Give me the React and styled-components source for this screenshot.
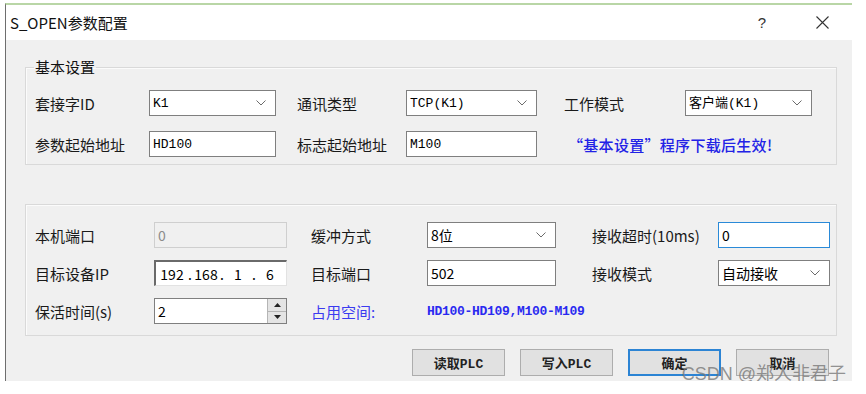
import React from 'react'
import styled, { createGlobalStyle, css } from 'styled-components'

const GlobalStyle = createGlobalStyle`
  body {
    margin: 0;
    background: #fff;
    font-family: "Noto Sans CJK SC", "Liberation Sans", sans-serif;
  }
`

const CJK = `"Noto Sans CJK SC", "Liberation Sans", sans-serif`
const MONO = `"Liberation Mono", "Noto Sans CJK SC", monospace`

const Window = styled.div`
  position: relative;
  width: 847px;
  height: 378px;
  margin: 3px 0 0 5px;
  box-sizing: border-box;
  border-top: 2px solid #b9d6a6;
  border-left: 1px solid #6e6e6e;
  display: flex;
  flex-direction: column;
`

const TitleBar = styled.div`
  height: 35px;
  flex: none;
  background: #fff;
  display: flex;
  align-items: center;
  padding: 0 0 0 4px;
  font-family: ${CJK};
  font-size: 15px;
  color: #111;
`

const Title = styled.div`
  flex: 1;
`

const TitleButton = styled.div`
  width: 60px;
  display: flex;
  align-items: center;
  justify-content: center;
  font-size: 15px;
  color: #333;
  font-family: "Liberation Sans", sans-serif;
`

const Body = styled.div`
  flex: 1;
  background: #f0f0f0;
  padding: 19px 15px 6px 19px;
  display: flex;
  flex-direction: column;
`

const GroupBox = styled.fieldset`
  margin: 0;
  padding: 0 0 7px 9px;
  border: 1px solid #d9d9d9;
  box-shadow: inset 1px 1px 0 #fbfbfb;
  min-width: 0;
`

const Legend = styled.legend`
  padding: 0 1px;
  margin-left: -1px;
  font-family: ${CJK};
  font-size: 15px;
  line-height: 16px;
  color: #111;
`

const Panel = styled.div`
  margin-top: 39px;
  border: 1px solid #d9d9d9;
  box-shadow: inset 1px 1px 0 #fbfbfb;
  padding: 17px 0 11px 9px;
`

const FormGrid = styled.div`
  display: grid;
  grid-template-columns: ${p => p.$cols};
  grid-auto-rows: 26px;
  row-gap: ${p => p.$rowGap}px;
  align-items: center;
  margin-top: ${p => p.$top || 0}px;
`

const Label = styled.div`
  padding-left: ${p => p.$indent || 0}px;
  font-family: ${CJK};
  font-size: 15px;
  color: #1a1a1a;
  white-space: nowrap;
`

const Field = styled.div`
  height: 26px;
  box-sizing: border-box;
  border: 1px solid #7f7f7f;
  background: #fff;
  display: flex;
  align-items: center;
  padding-left: 3px;
  font-family: ${p => (p.$mono ? MONO : CJK)};
  font-size: ${p => (p.$mono ? 13 : 14)}px;
  color: #000;
  white-space: pre;

  ${p => p.$disabled && css`
    background: #f0f0f0;
    border-color: #cfcfcf;
    color: #8c8c8c;
  `}

  ${p => p.$focus && css`
    border-color: #2a8ad8;
  `}

  ${p => p.$sunken && css`
    border-width: 2px 1px 1px 2px;
    border-color: #6a6a6a #e2e2e2 #e2e2e2 #6a6a6a;
    padding-left: 2px;
  `}
`

const FieldText = styled.span`
  flex: 1;
  line-height: 1;
`

const IpPart = styled.span`
  width: ${p => p.$w}px;
  text-align: center;
  flex: none;
`

const IpDot = styled.span`
  width: 8px;
  text-align: center;
  flex: none;
`

const Chevron = styled.svg`
  width: 10px;
  height: 6px;
  margin-right: 9px;
  flex: none;
`

const Spin = styled.div`
  width: 18px;
  height: 100%;
  flex: none;
  display: flex;
  flex-direction: column;
  border-left: 1px solid #b5b5b5;
`

const SpinButton = styled.div`
  flex: 1;
  background: #e4e4e4;
  display: flex;
  align-items: center;
  justify-content: center;
  & + & {
    border-top: 1px solid #b5b5b5;
  }
`

const Notice = styled.div`
  grid-column: ${p => p.$span};
  padding-left: ${p => p.$indent || 0}px;
  font-family: ${p => (p.$mono ? MONO : CJK)};
  font-size: ${p => (p.$mono ? 13 : 15)}px;
  font-weight: ${p => p.$weight || 400};
  color: ${p => p.$color || '#2525e8'};
  white-space: nowrap;
  letter-spacing: ${p => p.$spacing || 0}px;
`

const ButtonRow = styled.div`
  display: flex;
  justify-content: flex-end;
  gap: 15px;
  margin-top: 13px;
  padding-right: 8px;
`

const Button = styled.div`
  width: 93px;
  height: 27px;
  box-sizing: border-box;
  border: 1px solid #adadad;
  background: #e1e1e1;
  display: flex;
  align-items: center;
  justify-content: center;
  font-family: ${MONO};
  font-size: 13px;
  font-weight: 700;
  color: #222;

  ${p => p.$default && css`
    border: 2px solid #2c84d4;
  `}
`

const Watermark = styled.div`
  position: absolute;
  right: 6px;
  top: 354px;
  font-family: "Liberation Sans", "Noto Sans CJK SC", sans-serif;
  font-size: 18px;
  color: rgba(120, 120, 120, 0.8);
  white-space: nowrap;
  pointer-events: none;
`

const ArrowDown = () => (
  <Chevron viewBox='0 0 10 6'>
    <polyline points='0.5,0.5 5,5 9.5,0.5' fill='none' stroke='#6b6b6b' strokeWidth='1' />
  </Chevron>
)

const Combo = ({ value, mono }) => (
  <Field $mono={mono}>
    <FieldText>{value}</FieldText>
    <ArrowDown />
  </Field>
)

const SpinBox = ({ value }) => (
  <Field style={{ paddingRight: 0 }}>
    <FieldText>{value}</FieldText>
    <Spin>
      <SpinButton>
        <svg width='7' height='4' viewBox='0 0 7 4'><polygon points='0,4 3.5,0 7,4' fill='#222' /></svg>
      </SpinButton>
      <SpinButton>
        <svg width='7' height='4' viewBox='0 0 7 4'><polygon points='0,0 3.5,4 7,0' fill='#222' /></svg>
      </SpinButton>
    </Spin>
  </Field>
)

const IpField = ({ parts }) => (
  <Field $sunken>
    {parts.map((p, i) => (
      <React.Fragment key={i}>
        {i > 0 && <IpDot>.</IpDot>}
        <IpPart $w={i === 0 ? 28 : 24}>{p}</IpPart>
      </React.Fragment>
    ))}
  </Field>
)

export default function App () {
  return (
    <>
      <GlobalStyle />
      <Window>
        <TitleBar>
          <Title>S_OPEN参数配置</Title>
          <TitleButton>?</TitleButton>
          <TitleButton>
            <svg width='13' height='13' viewBox='0 0 13 13'>
              <path d='M0.5 0.5 L12.5 12.5 M12.5 0.5 L0.5 12.5' stroke='#333' strokeWidth='1.1' />
            </svg>
          </TitleButton>
        </TitleBar>
        <Body>
          <GroupBox>
            <Legend>基本设置</Legend>
            <FormGrid $cols='114px 127px 130px 131px 148px 127px' $rowGap={15} $top={15}>
              <Label>套接字ID</Label>
              <Combo value='K1' mono />
              <Label $indent={21}>通讯类型</Label>
              <Combo value='TCP(K1)' mono />
              <Label $indent={27}>工作模式</Label>
              <Combo value='客户端(K1)' mono />

              <Label>参数起始地址</Label>
              <Field $mono>HD100</Field>
              <Label $indent={21}>标志起始地址</Label>
              <Field $mono>M100</Field>
              <Notice $span='5 / 7' $indent={31} $weight={500} $color='#2222e6' $spacing={0.3}>“基本设置”程序下载后生效!</Notice>
            </FormGrid>
          </GroupBox>

          <Panel>
            <FormGrid $cols='119px 133px 140px 129px 162px 112px' $rowGap={12}>
              <Label>本机端口</Label>
              <Field $disabled>0</Field>
              <Label $indent={24}>缓冲方式</Label>
              <Combo value='8位' />
              <Label $indent={36}>接收超时(10ms)</Label>
              <Field $focus>0</Field>

              <Label>目标设备IP</Label>
              <IpField parts={['192', '168', '1', '6']} />
              <Label $indent={24}>目标端口</Label>
              <Field>502</Field>
              <Label $indent={36}>接收模式</Label>
              <Combo value='自动接收' />

              <Label>保活时间(s)</Label>
              <SpinBox value='2' />
              <Notice $indent={24} $color='#3b3bf0'>占用空间:</Notice>
              <Notice $span='4 / 7' $mono $weight={700} $color='#2a2af0' $spacing={-0.3}>HD100-HD109,M100-M109</Notice>
            </FormGrid>
          </Panel>

          <ButtonRow>
            <Button>读取PLC</Button>
            <Button>写入PLC</Button>
            <Button $default>确定</Button>
            <Button>取消</Button>
          </ButtonRow>
        </Body>
        <Watermark>CSDN @郑人非君子</Watermark>
      </Window>
    </>
  )
}
